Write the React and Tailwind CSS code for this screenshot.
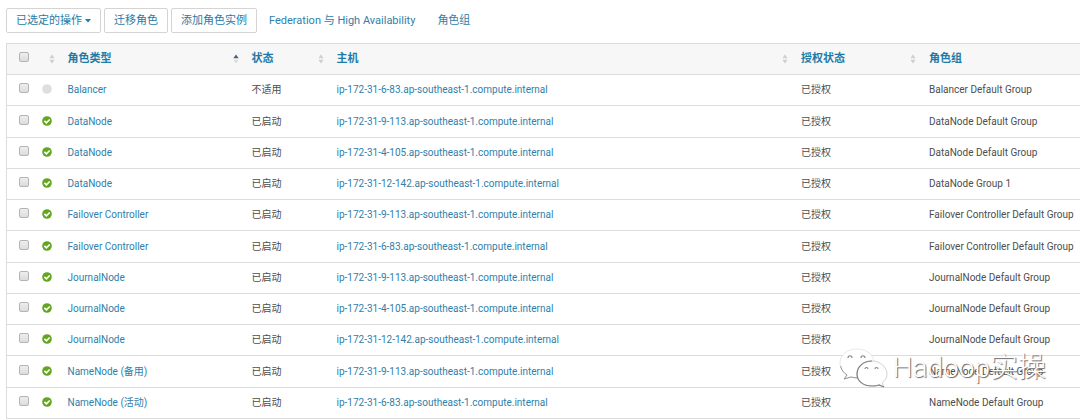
import { useState } from 'react';

const roles = [
  { type: 'Balancer', status: '不适用', host: 'ip-172-31-6-83', group: 'Balancer Default Group', idle: true },
  { type: 'DataNode', status: '已启动', host: 'ip-172-31-9-113', group: 'DataNode Default Group' },
  { type: 'DataNode', status: '已启动', host: 'ip-172-31-4-105', group: 'DataNode Default Group' },
  { type: 'DataNode', status: '已启动', host: 'ip-172-31-12-142', group: 'DataNode Group 1' },
  { type: 'Failover Controller', status: '已启动', host: 'ip-172-31-9-113', group: 'Failover Controller Default Group' },
  { type: 'Failover Controller', status: '已启动', host: 'ip-172-31-6-83', group: 'Failover Controller Default Group' },
  { type: 'JournalNode', status: '已启动', host: 'ip-172-31-9-113', group: 'JournalNode Default Group' },
  { type: 'JournalNode', status: '已启动', host: 'ip-172-31-4-105', group: 'JournalNode Default Group' },
  { type: 'JournalNode', status: '已启动', host: 'ip-172-31-12-142', group: 'JournalNode Default Group' },
  { type: 'NameNode (备用)', status: '已启动', host: 'ip-172-31-9-113', group: 'NameNode Default Group' },
  { type: 'NameNode (活动)', status: '已启动', host: 'ip-172-31-6-83', group: 'NameNode Default Group' },
];

function Button({ children }) {
  return (
    <button className="flex h-[25px] items-center gap-[3px] rounded-xs border border-[#d4d4d4] bg-white px-[9px] text-[#1f7ba6]">
      {children}
    </button>
  );
}

function Checkbox({ label, checked, onChange }) {
  return (
    <input
      type="checkbox"
      aria-label={label}
      checked={checked}
      onChange={onChange}
      className="mb-1 block size-[10px] appearance-none rounded-xs border border-[#b4b4b4] bg-linear-to-b from-[#eeeeee] to-[#dcdcdc] checked:bg-none checked:bg-[#1f7ba6]"
    />
  );
}

function SortIcon({ asc }) {
  return (
    <svg viewBox="0 0 6 10" className="h-[10px] w-[6px] shrink-0" aria-hidden="true">
      <path d="M3 0.5 L5.6 4.3 H0.4 Z" fill={asc ? '#4a6078' : '#cfcfcf'} />
      <path d="M3 9.5 L5.6 5.7 H0.4 Z" fill={asc ? '#dcdcdc' : '#cfcfcf'} />
    </svg>
  );
}

function HeadCell({ title, sort, asc, className }) {
  return (
    <th className={`pr-[5px] pl-2 text-left font-bold text-[#1f7ba6] ${className}`}>
      <div className="flex items-center justify-between">
        <span>{title}</span>
        {sort && <SortIcon asc={asc} />}
      </div>
    </th>
  );
}

function StatusIcon({ idle }) {
  return (
    <svg viewBox="0 0 10 10" className="mb-0.5 block size-[10px]" role="img" aria-label={idle ? 'none' : 'good'}>
      <circle cx="5" cy="5" r="4.8" fill={idle ? '#dedede' : '#64a51f'} />
      {!idle && <path d="M2.4 4.9 L4.4 6.8 L7.7 3.5" fill="none" stroke="#fff" strokeWidth="1.7" />}
    </svg>
  );
}

function Watermark() {
  return (
    <div className="pointer-events-none absolute right-[34px] bottom-[30px] flex items-center gap-1">
      <svg viewBox="0 0 50 42" className="h-[42px] w-[50px]" aria-hidden="true">
        <g fill="#fff">
          <path d="M18 2 C8 2 1 8 1 16 C1 21 4 25 8 28 L5 32 L12 30 C14 31 17 31 20 31 C28 31 35 24 35 16 C35 8 28 2 18 2 Z" stroke="#e2e2e2" strokeWidth="0.8" />
          <path d="M1.5 19 C3 24 5 26 8 28 L5 32 L12 30 L18 31" fill="none" stroke="#999" strokeWidth="1" />
          <path d="M33 14 C24 14 18 20 18 27 C18 34 24 39 33 39 C36 39 38 39 40 38 L45 40 L43 36 C46 34 48 31 48 27 C48 20 41 14 33 14 Z" stroke="#c8c8c8" strokeWidth="0.8" />
          <path d="M33 14 C24 14 18 20 18 27 C18 34 24 39 33 39 C36 39 38 39 40 38 L45 40" fill="none" stroke="#808080" strokeWidth="1.2" />
        </g>
        <g fill="none" stroke="#888" strokeWidth="1.2">
          <path d="M9 11 C9 8 13 8 13 11 M22 11 C22 8 26 8 26 11" />
          <path d="M26 22 C26 20 29 20 29 22 M36 22 C36 20 39 20 39 22" />
        </g>
      </svg>
      <span className="text-[28px] leading-8 font-light text-white [text-shadow:1px_1px_1px_#666]">Hadoop实操</span>
    </div>
  );
}

export default function App() {
  const [selected, setSelected] = useState([]);

  const toggle = (i) => {
    setSelected(selected.includes(i) ? selected.filter((s) => s !== i) : [...selected, i]);
  };

  const toggleAll = () => {
    setSelected(selected.length === roles.length ? [] : roles.map((_, i) => i));
  };

  return (
    <div className="relative overflow-hidden bg-white pl-[6px] font-[Roboto,'Noto_Sans_CJK_SC',sans-serif] text-[11px] leading-4 text-[#4d4d4d]">
      <div className="flex items-center pt-2 pb-[10px]">
        <div className="flex gap-[3px]">
          <Button>
            已选定的操作
            <svg viewBox="0 0 6 4" className="h-1 w-[6px]" aria-hidden="true">
              <path d="M0 0 H6 L3 3.5 Z" fill="currentColor" />
            </svg>
          </Button>
          <Button>迁移角色</Button>
          <Button>添加角色实例</Button>
        </div>
        <nav className="ml-3 flex gap-[22px] text-[#2f80aa]">
          <a href="#ha">Federation 与 High Availability</a>
          <a href="#groups">角色组</a>
        </nav>
      </div>

      <table className="w-full table-fixed border-collapse border-y border-l border-[#dcdcdc] whitespace-nowrap">
        <thead>
          <tr className="h-[31px] border-b border-[#dcdcdc] bg-[#f7f7f7]">
            <th className="w-[29px] pl-3">
              <Checkbox label="全选" checked={selected.length === roles.length} onChange={toggleAll} />
            </th>
            <HeadCell title="" sort className="w-6" />
            <HeadCell title="角色类型" sort asc className="w-[184px]" />
            <HeadCell title="状态" sort className="w-[85px]" />
            <HeadCell title="主机" sort />
            <HeadCell title="授权状态" sort className="w-32" />
            <HeadCell title="角色组" className="w-[159px]" />
          </tr>
        </thead>
        <tbody className="text-[10px]">
          {roles.map((role, i) => (
            <tr key={i} className="h-[31px] border-b border-[#dcdcdc] nth-[4n+2]:h-8">
              <td className="pl-3">
                <Checkbox label={role.type} checked={selected.includes(i)} onChange={() => toggle(i)} />
              </td>
              <td className="pl-[6px]">
                <StatusIcon idle={role.idle} />
              </td>
              <td className="pl-2">
                <a href="#role" className="text-[#2f80aa]">{role.type}</a>
              </td>
              <td className="pl-2">{role.status}</td>
              <td className="pl-2">
                <a href="#host" className="text-[#2f80aa]">{role.host}.ap-southeast-1.compute.internal</a>
              </td>
              <td className="pl-2">已授权</td>
              <td className="pl-2">{role.group}</td>
            </tr>
          ))}
        </tbody>
      </table>

      <Watermark />
    </div>
  );
}
